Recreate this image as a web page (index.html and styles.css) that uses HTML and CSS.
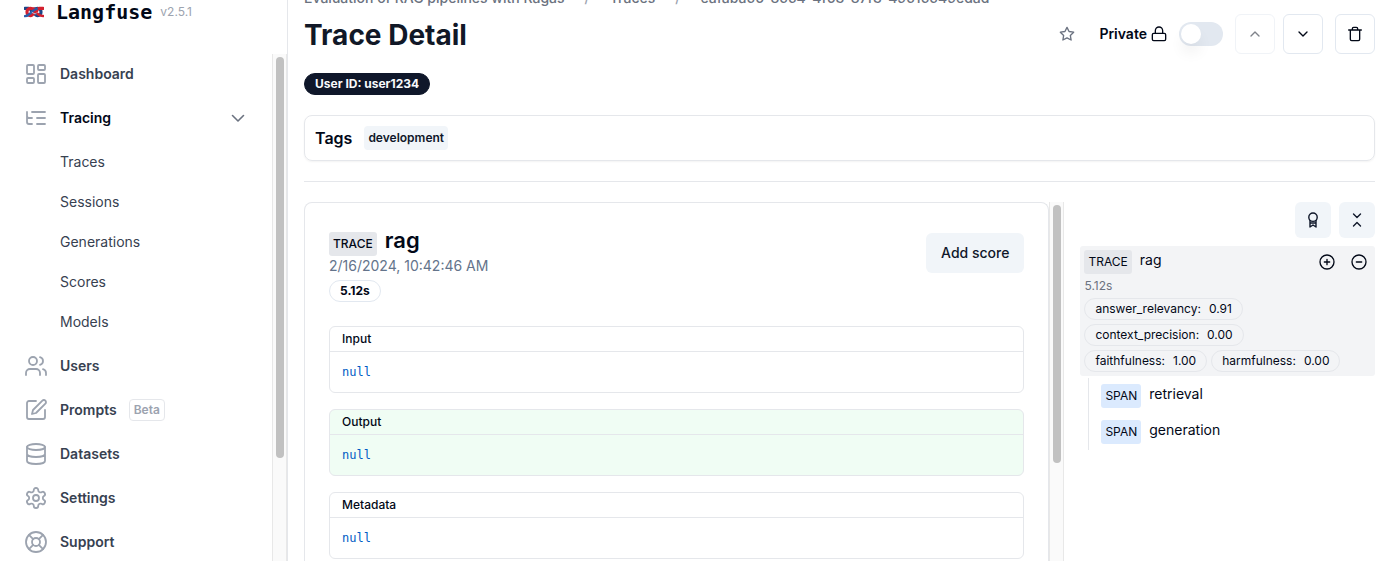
FILE: index.html
```
<!DOCTYPE html>
<html lang="en">
<head>
<meta charset="utf-8">
<title>Trace Detail</title>
<link rel="stylesheet" href="styles.css">
</head>
<body>
<div class="app">
  <aside class="sidebar">
    <div class="brand">
      <svg class="brand-logo" viewBox="0 0 22 14">
        <path d="M1 3h4c4 0 6 8 10 8 5 0 5-8 0-8-3 0-5 1-7 3" stroke="#1d4587" stroke-width="3.400"/>
        <path d="M21 3h-4c-4 0-6 8-10 8-5 0-5-8 0-8 3 0 5 1 7 3" stroke="#d3202f" stroke-width="3.400"/>
        <path d="M1 11.500c3 0 4-1 6-3s4-4.500 7-5" stroke="#2a5ba8" stroke-width="2.600"/>
        <path d="M21 11.500c-3 0-4-1-6-2.500" stroke="#d3202f" stroke-width="2.800"/>
        <path d="M9 7.500c1.500 1 2.500 1.500 4 1.500" stroke="#b9c7e0" stroke-width="1"/>
      </svg>
      <span class="brand-name">Langfuse</span>
      <span class="brand-version">v2.5.1</span>
    </div>
    <div class="sidebar-body">
      <nav class="nav">
        <a class="nav-item" href="#"><svg class="icon" viewBox="0 0 24 24"><rect x="3" y="3" width="7" height="9" rx="1"/><rect x="14" y="3" width="7" height="5" rx="1"/><rect x="14" y="12" width="7" height="9" rx="1"/><rect x="3" y="16" width="7" height="5" rx="1"/></svg>Dashboard</a>
        <div class="nav-group">
          <button class="nav-item nav-active" type="button"><svg class="icon" viewBox="0 0 24 24"><path d="M21 12h-8M21 6H8M21 18h-8M3 6v4c0 1.100.9 2 2 2h3M3 10v6c0 1.100.9 2 2 2h3"/></svg>Tracing<svg class="nav-chevron" viewBox="0 0 20 20"><path d="m4.500 7.500 5.500 5.500 5.500-5.500"/></svg></button>
          <a class="nav-sub" href="#">Traces</a>
          <a class="nav-sub" href="#">Sessions</a>
          <a class="nav-sub" href="#">Generations</a>
          <a class="nav-sub" href="#">Scores</a>
          <a class="nav-sub" href="#">Models</a>
        </div>
        <a class="nav-item" href="#"><svg class="icon" viewBox="0 0 24 24"><path d="M16 21v-2a4 4 0 0 0-4-4H6a4 4 0 0 0-4 4v2"/><circle cx="9" cy="7" r="4"/><path d="M22 21v-2a4 4 0 0 0-3-3.870M16 3.130a4 4 0 0 1 0 7.750"/></svg>Users</a>
        <a class="nav-item" href="#"><svg class="icon" viewBox="0 0 24 24"><path d="M12 3H5a2 2 0 0 0-2 2v14a2 2 0 0 0 2 2h14a2 2 0 0 0 2-2v-7"/><path d="M18.375 2.625a2.121 2.121 0 1 1 3 3L12 15l-4 1 1-4Z"/></svg>Prompts<span class="beta">Beta</span></a>
        <a class="nav-item" href="#"><svg class="icon" viewBox="0 0 24 24"><ellipse cx="12" cy="5" rx="9" ry="3"/><path d="M3 5v14a9 3 0 0 0 18 0V5M3 12a9 3 0 0 0 18 0"/></svg>Datasets</a>
        <a class="nav-item" href="#"><svg class="icon" viewBox="0 0 24 24"><path d="M12.220 2h-.44a2 2 0 0 0-2 2v.18a2 2 0 0 1-1 1.730l-.43.25a2 2 0 0 1-2 0l-.15-.08a2 2 0 0 0-2.730.73l-.22.38a2 2 0 0 0 .73 2.730l.15.1a2 2 0 0 1 1 1.720v.51a2 2 0 0 1-1 1.740l-.15.09a2 2 0 0 0-.73 2.730l.22.38a2 2 0 0 0 2.730.73l.15-.08a2 2 0 0 1 2 0l.43.25a2 2 0 0 1 1 1.730V20a2 2 0 0 0 2 2h.44a2 2 0 0 0 2-2v-.18a2 2 0 0 1 1-1.730l.43-.25a2 2 0 0 1 2 0l.15.08a2 2 0 0 0 2.730-.73l.22-.39a2 2 0 0 0-.73-2.730l-.15-.08a2 2 0 0 1-1-1.740v-.5a2 2 0 0 1 1-1.740l.15-.09a2 2 0 0 0 .73-2.730l-.22-.38a2 2 0 0 0-2.730-.73l-.15.08a2 2 0 0 1-2 0l-.43-.25a2 2 0 0 1-1-1.730V4a2 2 0 0 0-2-2z"/><circle cx="12" cy="12" r="3"/></svg>Settings</a>
        <a class="nav-item" href="#"><svg class="icon" viewBox="0 0 24 24"><circle cx="12" cy="12" r="10"/><path d="m4.930 4.930 4.240 4.240M14.830 9.170l4.240-4.240M14.830 14.830l4.240 4.240M9.170 14.830l-4.240 4.240"/><circle cx="12" cy="12" r="4"/></svg>Support</a>
      </nav>
      <div class="track"><div class="thumb thumb-nav"></div></div>
    </div>
  </aside>

  <main class="main">
    <nav class="crumbs">
      <a href="#">Evaluation of RAG pipelines with Ragas</a><span class="slash">/</span><a href="#">Traces</a><span class="slash">/</span><a href="#">eafaba56-8554-4f63-87f3-49515549edad</a>
    </nav>
    <header class="head">
      <h1>Trace Detail</h1>
      <div class="actions">
        <button class="star" type="button" aria-label="Bookmark"><svg class="icon16" viewBox="0 0 24 24"><path d="m12 2 3.090 6.260L22 9.270l-5 4.870 1.180 6.880L12 17.770l-6.180 3.250L7 14.140 2 9.270l6.910-1.010Z"/></svg></button>
        <label class="privacy" for="public">Private<svg class="icon16" viewBox="0 0 24 24"><rect x="2" y="11" width="20" height="11" rx="2"/><path d="M6.500 11V7a5.500 5.500 0 0 1 11 0v4"/></svg></label>
        <input class="switch" id="public" type="checkbox">
        <button class="square" type="button" aria-label="Previous" disabled><svg class="icon16" viewBox="0 0 24 24"><path d="m18 15-6-6-6 6"/></svg></button>
        <button class="square" type="button" aria-label="Next"><svg class="icon16" viewBox="0 0 24 24"><path d="m6 9 6 6 6-6"/></svg></button>
        <button class="square" type="button" aria-label="Delete"><svg class="icon16" viewBox="0 0 24 24"><path d="M2.500 6h19M19 6v14c0 1-1 2-2 2H7c-1 0-2-1-2-2V6M8 6V4c0-1 1-2 2-2h4c1 0 2 1 2 2v2"/></svg></button>
      </div>
    </header>
    <div><span class="pill pill-dark">User ID: user1234</span></div>
    <section class="tags"><h2>Tags</h2><span class="tag">development</span></section>
    <hr class="divider">
    <div class="columns">
      <div class="detail">
        <article class="card">
          <div class="card-head">
            <div class="card-info">
              <div class="card-title"><span class="kind kind-bold">TRACE</span><h3>rag</h3></div>
              <time class="date">2/16/2024, 10:42:46 AM</time>
              <span class="pill">5.12s</span>
            </div>
            <button class="add" type="button">Add score</button>
          </div>
          <section class="io"><h4>Input</h4><code>null</code></section>
          <section class="io io-green"><h4>Output</h4><code>null</code></section>
          <section class="io"><h4>Metadata</h4><code>null</code></section>
        </article>
        <div class="track"><div class="thumb thumb-detail"></div></div>
      </div>
      <div class="tree">
        <div class="tree-tools">
          <button class="tool" type="button" aria-label="Toggle scores"><svg class="icon16" viewBox="0 0 16 16"><circle cx="8" cy="5.200" r="4.200"/><path d="M5 8.500V15l3-2 3 2V8.500M5 11h6"/></svg></button>
          <button class="tool" type="button" aria-label="Collapse all"><svg class="icon16" viewBox="0 0 16 16"><path d="m4.500 2 3.500 3.500L11.500 2M4.500 14 8 10.500l3.500 3.500"/></svg></button>
        </div>
        <div class="node">
          <div class="node-line">
            <span class="kind">TRACE</span><span class="node-name">rag</span>
            <button class="round" type="button" aria-label="Expand"><svg class="icon16" viewBox="0 0 24 24"><circle cx="12" cy="12" r="10.500"/><path d="M8 12h8M12 8v8"/></svg></button>
            <button class="round" type="button" aria-label="Collapse"><svg class="icon16" viewBox="0 0 24 24"><circle cx="12" cy="12" r="10.500"/><path d="M8 12h8"/></svg></button>
          </div>
          <span class="latency">5.12s</span>
          <div class="scores">
            <span class="pill score"><span>answer_relevancy:</span><span>0.91</span></span>
            <span class="pill score"><span>context_precision:</span><span>0.00</span></span>
            <span class="pill score"><span>faithfulness:</span><span>1.00</span></span>
            <span class="pill score"><span>harmfulness:</span><span>0.00</span></span>
          </div>
        </div>
        <div class="children">
          <div class="child"><span class="kind kind-span">SPAN</span><span class="node-name">retrieval</span></div>
          <div class="child"><span class="kind kind-span">SPAN</span><span class="node-name">generation</span></div>
        </div>
      </div>
    </div>
  </main>
</div>
</body>
</html>
```
FILE: styles.css
```
* { box-sizing: border-box; margin: 0; }
body {
  font-family: Inter, "Liberation Sans", sans-serif;
  font-size: 14px;
  line-height: 20px;
  color: #020817;
  background: #fff;
}
a { color: inherit; text-decoration: none; }
button { font: inherit; color: inherit; background: none; border: 0; padding: 0; }
svg { fill: none; stroke: currentColor; stroke-width: 2; stroke-linecap: round; stroke-linejoin: round; flex: none; }
.icon16 { width: 16px; height: 16px; }

.app { display: flex; height: 100vh; overflow: hidden; }

.sidebar { width: 288px; flex: none; display: flex; flex-direction: column; border-right: 1px solid #e5e7eb; }
.brand { display: flex; align-items: center; height: 54px; padding: 0 24px 30px; }
.brand-logo { width: 20px; height: 14px; margin-right: 12px; }
.brand-name { font: bold 20px/24px "DejaVu Sans Mono", monospace; margin-right: 8px; }
.brand-version { font-size: 12px; color: #9ca3af; }
.sidebar-body { flex: 1; display: flex; min-height: 0; }
.nav { flex: 1; display: flex; flex-direction: column; gap: 4px; padding: 0 16px; overflow: hidden; }
.nav-item {
  display: flex; align-items: center; gap: 12px; width: 100%; height: 40px; flex: none;
  padding: 0 8px; font-weight: 600; color: #374151;
}
.nav-active { margin-bottom: 4px; color: #020817; }
.icon { width: 24px; height: 24px; color: #9ca3af; stroke-width: 1.8; }
.nav-chevron { width: 20px; height: 20px; margin-left: auto; color: #6b7280; stroke-width: 1.6; }
.nav-group { display: flex; flex-direction: column; }
.nav-sub { padding: 10px 8px 10px 44px; color: #374151; }
.beta { border: 1px solid #e5e7eb; border-radius: 4px; padding: 2px 4px; font-size: 12px; line-height: 16px; color: #9ca3af; }

.track { width: 15px; flex: none; padding: 3px; border: 1px solid #e8e8e8; border-width: 0 1px; background: #fafafa; }
.thumb { width: 8px; border-radius: 4px; background: #c1c1c1; }
.thumb-nav { height: 80%; }
.thumb-detail { height: 73%; }

.main { flex: 1; min-width: 0; display: flex; flex-direction: column; padding: 0 16px; margin-top: -12px; }
.crumbs { display: flex; gap: 20px; height: 26px; font-weight: 500; color: #6b7280; white-space: nowrap; }
.slash { color: #9ca3af; }
.head { display: flex; justify-content: space-between; align-items: center; height: 40px; margin-bottom: 19px; }
h1 { font-size: 28px; line-height: 36px; font-weight: 700; color: #111827; padding-top: 2px; }
.actions { display: flex; align-items: center; gap: 12px; }
.star { display: flex; margin-right: 12px; color: #6b7280; }
.privacy { display: flex; align-items: center; gap: 4px; font-weight: 600; }
.switch {
  appearance: none; display: flex; width: 44px; height: 24px; padding: 2px; border-radius: 12px; background: #e2e8f0;
}
.switch::before {
  content: ""; width: 20px; height: 20px; border-radius: 50%; background: #fff;
  box-shadow: 0 10px 15px -3px rgba(0, 0, 0, .1);
}
.square {
  display: flex; align-items: center; justify-content: center; width: 40px; height: 40px;
  border: 1px solid #e2e8f0; border-radius: 6px;
}
.square:disabled { opacity: .5; }
.square:disabled + .square { margin-left: -4px; }

.pill {
  display: inline-flex; align-items: center; height: 22px; padding: 0 10px;
  border: 1px solid #e2e8f0; border-radius: 11px; font-size: 12px; line-height: 16px; font-weight: 700; vertical-align: top;
}
.pill-dark { background: #0f172a; border-color: #0f172a; color: #f8fafc; }
.tags {
  display: flex; align-items: center; gap: 12px; height: 46px; margin-top: 20px; padding: 0 10px;
  border: 1px solid #e5e7eb; border-radius: 8px; box-shadow: 0 1px 2px rgba(0, 0, 0, .05); flex: none;
}
h2 { font-size: 16px; line-height: 24px; font-weight: 600; }
.tag { padding: 4px; border-radius: 4px; background: #f1f5f9; font-size: 12px; line-height: 16px; font-weight: 600; color: #0f172a; }
.divider { border: 0; height: 1px; background: #e5e7eb; margin: 20px 0; flex: none; }

.columns { flex: 1; min-height: 0; display: grid; grid-template-columns: repeat(7, 1fr); gap: 16px; }
.detail { grid-column: span 5; display: flex; min-height: 0; }
.card { flex: 1; min-width: 0; padding: 24px; border: 1px solid #e5e7eb; border-bottom: 0; border-radius: 8px 8px 0 0; overflow: hidden; }
.card-head { display: flex; justify-content: space-between; align-items: flex-start; margin-bottom: 24px; }
.card-info { display: flex; flex-direction: column; align-items: flex-start; }
.card-title { display: flex; align-items: flex-end; gap: 8px; height: 29px; }
h3 { font-size: 22px; line-height: 32px; font-weight: 600; }
.kind { padding: 4px; border-radius: 3px; background: #e5e7eb; font-size: 12px; line-height: 16px; }
.kind-bold { font-weight: 500; }
.kind-span { background: #dbeafe; }
.date { color: #64748b; margin-bottom: 4px; }
.add { margin-top: 6px; padding: 10px 15px; border-radius: 6px; background: #f1f5f9; font-weight: 500; color: #0f172a; }
.io { margin-bottom: 16px; border: 1px solid #e5e7eb; border-radius: 6px; }
.io-green { background: #f0fdf4; }
h4 { padding: 4px 12px; border-bottom: 1px solid #e5e7eb; font-size: 12px; line-height: 16px; font-weight: 500; }
code { display: block; padding: 12px; font: 12px/16px "DejaVu Sans Mono", monospace; color: #005cc5; }

.tree { grid-column: span 2; min-width: 0; }
.tree-tools { display: flex; justify-content: flex-end; gap: 8px; margin-bottom: 8px; }
.tool { display: flex; align-items: center; justify-content: center; width: 36px; height: 36px; border-radius: 6px; background: #f1f5f9; color: #0f172a; }
.tool svg { stroke-width: 1.4; }
.node { padding: 4px; border-radius: 3px; background: #f3f4f6; }
.node-line, .child { display: flex; align-items: flex-start; gap: 8px; }
.round { display: flex; align-self: center; margin-right: 4px; }
.round + .round { margin-left: 4px; }
.node-line .node-name { flex: 1; }
.latency { display: block; font-size: 12px; line-height: 16px; margin: 4px 0; color: #6b7280; }
.scores { display: flex; flex-wrap: wrap; gap: 4px; padding-right: 24px; }
.score { gap: 8px; font-weight: 400; border-color: #e5e7eb; }
.children { margin: 2px 0 0 8px; padding: 6px 0 6px 12px; border-left: 1px solid #e5e7eb; display: flex; flex-direction: column; gap: 12px; }
```
